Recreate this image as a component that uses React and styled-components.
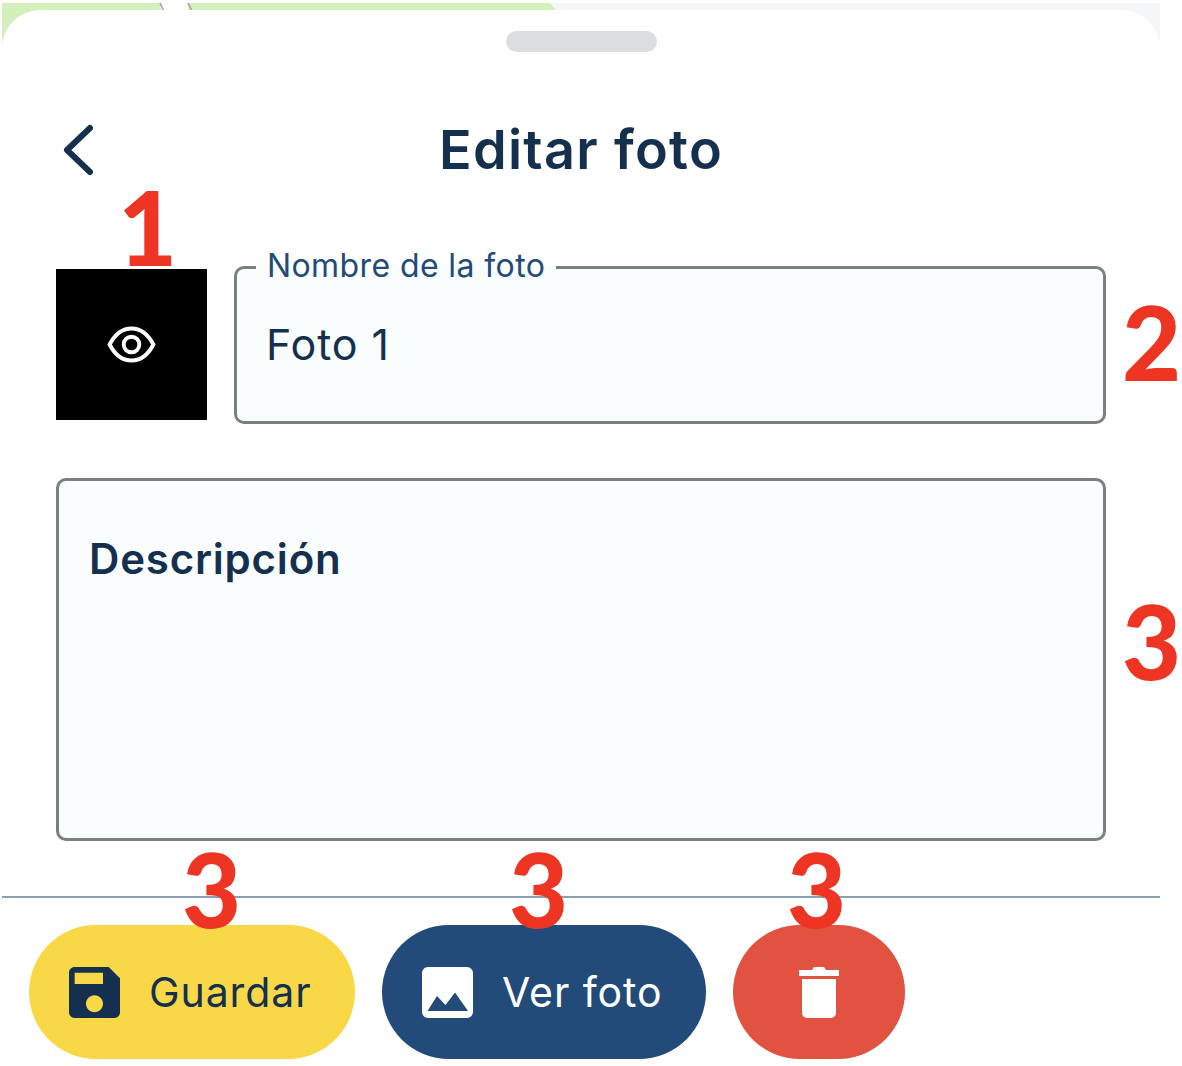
import React from 'react';
import styled, { createGlobalStyle } from 'styled-components';

const GlobalStyle = createGlobalStyle`
  html, body {
    margin: 0;
    padding: 0;
    background: #fff;
  }
  * {
    box-sizing: border-box;
  }
`;

const Page = styled.div`
  position: relative;
  width: 1182px;
  height: 1066px;
  overflow: hidden;
  font-family: Inter, "Noto Sans", sans-serif;
  color: #15304f;
`;

const Screen = styled.div`
  position: relative;
  width: 1158px;
  margin-left: 2px;
  padding-top: 10px;
`;

const MapPeek = styled.svg`
  position: absolute;
  top: 3px;
  left: 0;
  width: 1158px;
  height: 60px;
`;

const Sheet = styled.div`
  position: relative;
  background: #fff;
  border-radius: 38px 38px 0 0;
  height: 1056px;
  display: flex;
  flex-direction: column;
`;

const Handle = styled.div`
  width: 151px;
  height: 21px;
  margin: 21px auto 0;
  border-radius: 11px;
  background: #dcddde;
`;

const Header = styled.header`
  position: relative;
  height: 80px;
  margin-top: 58px;
  display: flex;
  align-items: center;
  justify-content: center;
`;

const BackButton = styled.button`
  position: absolute;
  left: 55px;
  top: 11px;
  width: 40px;
  height: 58px;
  padding: 0;
  border: 0;
  background: none;
  color: #15304f;
`;

const Title = styled.h1`
  margin: 0;
  font-size: 54px;
  line-height: 60px;
  font-weight: 600;
  letter-spacing: 1.3px;
`;

const Form = styled.div`
  padding: 0 54px;
  margin-top: 76px;
`;

const PhotoRow = styled.div`
  display: flex;
  align-items: flex-start;
  gap: 27px;
`;

const Thumb = styled.div`
  flex: none;
  width: 151px;
  height: 151px;
  margin-top: 3px;
  background: #000;
  color: #fff;
  display: flex;
  align-items: center;
  justify-content: center;
`;

const Field = styled.div`
  position: relative;
  flex: 1;
  height: ${(p) => p.$height}px;
  margin-top: ${(p) => p.$top || 0}px;
  border: 3px solid #7c7f82;
  border-radius: 10px;
  background: #f9fdfe;
  padding-left: 30px;
  display: flex;
  align-items: ${(p) => (p.$top ? 'flex-start' : 'center')};
`;

const FieldLabel = styled.label`
  position: absolute;
  left: 19px;
  top: -22px;
  padding: 0 11px;
  background: linear-gradient(#fff 50%, #f9fdfe 50%);
  font-size: 32px;
  line-height: 38px;
  letter-spacing: 0.4px;
  color: #224b79;
`;

const FieldValue = styled.span`
  margin: -2px 0 0 -1px;
  font-size: 43px;
  line-height: 50px;
  letter-spacing: 0.9px;
`;

const Placeholder = styled.span`
  margin-top: 53px;
  font-size: 42px;
  line-height: 50px;
  font-weight: 600;
  letter-spacing: 0.8px;
`;

const Divider = styled.hr`
  margin: 55px 0 0;
  height: 2px;
  border: 0;
  background: #8ca0b4;
`;

const Footer = styled.footer`
  display: flex;
  gap: 27px;
  margin-top: 27px;
  padding-left: 27px;
`;

const ActionButton = styled.button`
  height: 134px;
  width: ${(p) => p.$width}px;
  padding: 0 0 0 ${(p) => (p.$iconOnly ? 0 : 40)}px;
  border: 0;
  border-radius: 67px;
  background: ${(p) => p.$bg};
  color: ${(p) => p.$fg};
  font-family: inherit;
  font-size: 41px;
  letter-spacing: 0.9px;
  display: flex;
  align-items: center;
  justify-content: ${(p) => (p.$iconOnly ? 'center' : 'flex-start')};
  gap: 29px;
`;

const Badge = styled.span`
  position: absolute;
  left: ${(p) => p.$x}px;
  top: ${(p) => p.$y}px;
  font-family: Lato, "Open Sans", sans-serif;
  font-size: 102px;
  font-weight: 900;
  line-height: 102px;
  color: #ee3524;
`;

const SaveIcon = () => (
  <svg width="51" height="51" viewBox="3 3 18 18" fill="currentColor">
    <path d="M17 3H5c-1.11 0-2 .9-2 2v14c0 1.1.89 2 2 2h14c1.1 0 2-.9 2-2V7l-4-4zm-5 16c-1.66 0-3-1.34-3-3s1.34-3 3-3 3 1.34 3 3-1.34 3-3 3zm3-10H5V5h10v4z" />
  </svg>
);

const ImageIcon = () => (
  <svg width="51" height="51" viewBox="0 0 51 51" fill="currentColor">
    <path
      fillRule="evenodd"
      d="M6 0h39a6 6 0 0 1 6 6v39a6 6 0 0 1-6 6H6a6 6 0 0 1-6-6V6a6 6 0 0 1 6-6zM5.500 44H46L33 25.500 23.500 38 15 29 5.500 44z"
    />
  </svg>
);

const TrashIcon = () => (
  <svg width="40" height="52" viewBox="0 0 40 52" fill="currentColor">
    <path d="M0 4h13l2-3h10l2 3h13v6H0zM3 13h34v34a5 5 0 0 1-5 5H8a5 5 0 0 1-5-5z" />
  </svg>
);

const EyeIcon = () => (
  <svg width="49" height="37" viewBox="0 0 50 38" fill="none" stroke="currentColor" strokeWidth="4">
    <path d="M2.500 19C8 8.500 15.500 2.500 25 2.500S42 8.500 47.500 19C42 29.500 34.500 35.500 25 35.500S8 29.500 2.500 19z" />
    <circle cx="25" cy="19" r="8" />
  </svg>
);

export default function App() {
  return (
    <Page>
      <GlobalStyle />
      <Screen>
        <MapPeek viewBox="0 0 1158 60">
          <rect width="1158" height="60" fill="#f5f6f8" />
          <path d="M0 0H158L170 60H0z" fill="#d3f0bc" />
          <path d="M186 0H548L556 10V60H192z" fill="#d3f0bc" />
          <path d="M160 0H186V60H160z" fill="#fff" />
          <path d="M158 0l4 8M186 0l4 8" stroke="#9aa69a" strokeWidth="1.500" fill="none" />
        </MapPeek>
        <Sheet>
          <Handle />
          <Header>
            <BackButton aria-label="Volver">
              <svg width="40" height="58" viewBox="0 0 40 58" fill="none" stroke="currentColor" strokeWidth="6" strokeLinecap="round" strokeLinejoin="round">
                <path d="M33 7L10 29l23 22" />
              </svg>
            </BackButton>
            <Title>Editar foto</Title>
          </Header>
          <Form>
            <PhotoRow>
              <Thumb>
                <EyeIcon />
              </Thumb>
              <Field $height={158}>
                <FieldLabel>Nombre de la foto</FieldLabel>
                <FieldValue>Foto 1</FieldValue>
              </Field>
            </PhotoRow>
            <Field $height={363} $top={54}>
              <Placeholder>Descripción</Placeholder>
            </Field>
          </Form>
          <Divider />
          <Footer>
            <ActionButton $width={326} $bg="#f9d847" $fg="#15304f">
              <SaveIcon />
              Guardar
            </ActionButton>
            <ActionButton $width={324} $bg="#224b79" $fg="#fff">
              <ImageIcon />
              Ver foto
            </ActionButton>
            <ActionButton $width={172} $bg="#e25241" $fg="#fff" $iconOnly>
              <TrashIcon />
            </ActionButton>
          </Footer>
        </Sheet>
      </Screen>
      <Badge $x={118} $y={176}>1</Badge>
      <Badge $x={1122} $y={291}>2</Badge>
      <Badge $x={1122} $y={590}>3</Badge>
      <Badge $x={182} $y={838}>3</Badge>
      <Badge $x={509} $y={838}>3</Badge>
      <Badge $x={787} $y={838}>3</Badge>
    </Page>
  );
}
